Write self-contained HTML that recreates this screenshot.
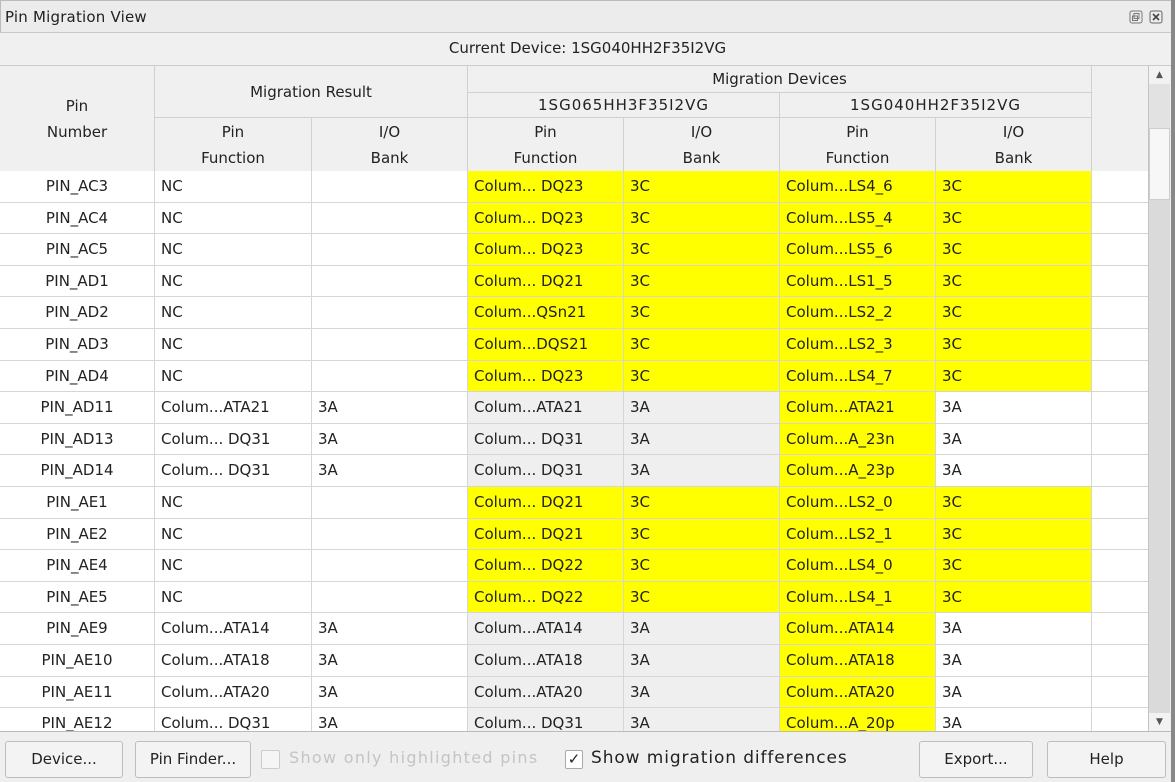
<!DOCTYPE html>
<html><head><meta charset="utf-8"><style>
*{margin:0;padding:0;box-sizing:border-box}
body{width:1175px;height:782px;background:#efefef;font-family:"DejaVu Sans","Liberation Sans",sans-serif;font-size:15px;color:#222;position:relative;overflow:hidden}
.abs{position:absolute}
.title{left:0;top:0;width:1175px;height:33px;background:#ececec;border:1px solid #bbb;border-bottom:1px solid #c8c8c8}
.title span{position:absolute;left:4px;top:7px;font-size:15px;letter-spacing:0.2px}
.cur{left:0;top:33px;width:1175px;height:33px;background:#f0f0f0;border-bottom:1px solid #ccc;text-align:center;line-height:30px}
.h{position:absolute;background:#f0f0f0;border-right:1px solid #d0d0d0;border-bottom:1px solid #d0d0d0;text-align:center;display:flex;align-items:center;justify-content:center;line-height:26px}
.row{position:absolute;left:0;width:1148px;height:31.6px;border-bottom:1px solid #d6d6d6;background:#fff}
.c{position:absolute;top:0;height:100%;border-right:1px solid #d6d6d6;padding-left:6px;line-height:31px;white-space:nowrap;overflow:hidden}
.y{background:#ffff00}.g{background:#efefef}
.btn{position:absolute;top:741px;height:37px;border:1px solid #bdbdbd;border-radius:3px;background:#f3f3f3;text-align:center;line-height:35px}
</style></head><body>
<div class="abs title"><span>Pin Migration View</span>
<svg class="abs" style="left:1128px;top:9px" width="14" height="14"><rect x="1" y="1" width="12" height="12" rx="2" fill="none" stroke="#777"/><rect x="5" y="3.5" width="5" height="5" fill="none" stroke="#777"/><rect x="3.5" y="6" width="5" height="4.5" fill="none" stroke="#777"/></svg>
<svg class="abs" style="left:1148px;top:9px" width="14" height="14"><rect x="1" y="1" width="12" height="12" rx="2" fill="none" stroke="#666"/><path d="M4 4L10 10M10 4L4 10" stroke="#444" stroke-width="1.6"/></svg>
</div>
<div class="abs cur">Current Device: 1SG040HH2F35I2VG</div>
<div class="abs" style="left:0;top:66px;width:1148px;height:106px;background:#f0f0f0"></div>
<div class="h" style="left:0;top:66px;width:155px;height:106px;border-bottom:none">Pin<br>Number</div>
<div class="h" style="left:155px;top:66px;width:313px;height:52px">Migration Result</div>
<div class="h" style="left:468px;top:66px;width:624px;height:27px">Migration Devices</div>
<div class="h" style="left:468px;top:93px;width:312px;height:25px;letter-spacing:1px">1SG065HH3F35I2VG</div>
<div class="h" style="left:780px;top:93px;width:312px;height:25px;letter-spacing:1px">1SG040HH2F35I2VG</div>
<div class="h" style="left:155px;top:118px;width:157px;height:54px">Pin<br>Function</div>
<div class="h" style="left:312px;top:118px;width:156px;height:54px">I/O<br>Bank</div>
<div class="h" style="left:468px;top:118px;width:156px;height:54px">Pin<br>Function</div>
<div class="h" style="left:624px;top:118px;width:156px;height:54px">I/O<br>Bank</div>
<div class="h" style="left:780px;top:118px;width:156px;height:54px">Pin<br>Function</div>
<div class="h" style="left:936px;top:118px;width:156px;height:54px">I/O<br>Bank</div>
<div class="abs" style="left:0;top:171px;width:1148px;height:560px;background:#fff;overflow:hidden" id="tb">
<div class="row" style="top:0px"><div class="c" style="left:0;width:155px;text-align:center;padding:0">PIN_AC3</div><div class="c" style="left:155px;width:157px">NC</div><div class="c" style="left:312px;width:156px"></div><div class="c y" style="left:468px;width:156px">Colum... DQ23</div><div class="c y" style="left:624px;width:156px">3C</div><div class="c y" style="left:780px;width:156px">Colum...LS4_6</div><div class="c y" style="left:936px;width:156px">3C</div></div>
<div class="row" style="top:31.6px"><div class="c" style="left:0;width:155px;text-align:center;padding:0">PIN_AC4</div><div class="c" style="left:155px;width:157px">NC</div><div class="c" style="left:312px;width:156px"></div><div class="c y" style="left:468px;width:156px">Colum... DQ23</div><div class="c y" style="left:624px;width:156px">3C</div><div class="c y" style="left:780px;width:156px">Colum...LS5_4</div><div class="c y" style="left:936px;width:156px">3C</div></div>
<div class="row" style="top:63.2px"><div class="c" style="left:0;width:155px;text-align:center;padding:0">PIN_AC5</div><div class="c" style="left:155px;width:157px">NC</div><div class="c" style="left:312px;width:156px"></div><div class="c y" style="left:468px;width:156px">Colum... DQ23</div><div class="c y" style="left:624px;width:156px">3C</div><div class="c y" style="left:780px;width:156px">Colum...LS5_6</div><div class="c y" style="left:936px;width:156px">3C</div></div>
<div class="row" style="top:94.8px"><div class="c" style="left:0;width:155px;text-align:center;padding:0">PIN_AD1</div><div class="c" style="left:155px;width:157px">NC</div><div class="c" style="left:312px;width:156px"></div><div class="c y" style="left:468px;width:156px">Colum... DQ21</div><div class="c y" style="left:624px;width:156px">3C</div><div class="c y" style="left:780px;width:156px">Colum...LS1_5</div><div class="c y" style="left:936px;width:156px">3C</div></div>
<div class="row" style="top:126.4px"><div class="c" style="left:0;width:155px;text-align:center;padding:0">PIN_AD2</div><div class="c" style="left:155px;width:157px">NC</div><div class="c" style="left:312px;width:156px"></div><div class="c y" style="left:468px;width:156px">Colum...QSn21</div><div class="c y" style="left:624px;width:156px">3C</div><div class="c y" style="left:780px;width:156px">Colum...LS2_2</div><div class="c y" style="left:936px;width:156px">3C</div></div>
<div class="row" style="top:158px"><div class="c" style="left:0;width:155px;text-align:center;padding:0">PIN_AD3</div><div class="c" style="left:155px;width:157px">NC</div><div class="c" style="left:312px;width:156px"></div><div class="c y" style="left:468px;width:156px">Colum...DQS21</div><div class="c y" style="left:624px;width:156px">3C</div><div class="c y" style="left:780px;width:156px">Colum...LS2_3</div><div class="c y" style="left:936px;width:156px">3C</div></div>
<div class="row" style="top:189.6px"><div class="c" style="left:0;width:155px;text-align:center;padding:0">PIN_AD4</div><div class="c" style="left:155px;width:157px">NC</div><div class="c" style="left:312px;width:156px"></div><div class="c y" style="left:468px;width:156px">Colum... DQ23</div><div class="c y" style="left:624px;width:156px">3C</div><div class="c y" style="left:780px;width:156px">Colum...LS4_7</div><div class="c y" style="left:936px;width:156px">3C</div></div>
<div class="row" style="top:221.2px"><div class="c" style="left:0;width:155px;text-align:center;padding:0">PIN_AD11</div><div class="c" style="left:155px;width:157px">Colum...ATA21</div><div class="c" style="left:312px;width:156px">3A</div><div class="c g" style="left:468px;width:156px">Colum...ATA21</div><div class="c g" style="left:624px;width:156px">3A</div><div class="c y" style="left:780px;width:156px">Colum...ATA21</div><div class="c" style="left:936px;width:156px">3A</div></div>
<div class="row" style="top:252.8px"><div class="c" style="left:0;width:155px;text-align:center;padding:0">PIN_AD13</div><div class="c" style="left:155px;width:157px">Colum... DQ31</div><div class="c" style="left:312px;width:156px">3A</div><div class="c g" style="left:468px;width:156px">Colum... DQ31</div><div class="c g" style="left:624px;width:156px">3A</div><div class="c y" style="left:780px;width:156px">Colum...A_23n</div><div class="c" style="left:936px;width:156px">3A</div></div>
<div class="row" style="top:284.4px"><div class="c" style="left:0;width:155px;text-align:center;padding:0">PIN_AD14</div><div class="c" style="left:155px;width:157px">Colum... DQ31</div><div class="c" style="left:312px;width:156px">3A</div><div class="c g" style="left:468px;width:156px">Colum... DQ31</div><div class="c g" style="left:624px;width:156px">3A</div><div class="c y" style="left:780px;width:156px">Colum...A_23p</div><div class="c" style="left:936px;width:156px">3A</div></div>
<div class="row" style="top:316px"><div class="c" style="left:0;width:155px;text-align:center;padding:0">PIN_AE1</div><div class="c" style="left:155px;width:157px">NC</div><div class="c" style="left:312px;width:156px"></div><div class="c y" style="left:468px;width:156px">Colum... DQ21</div><div class="c y" style="left:624px;width:156px">3C</div><div class="c y" style="left:780px;width:156px">Colum...LS2_0</div><div class="c y" style="left:936px;width:156px">3C</div></div>
<div class="row" style="top:347.6px"><div class="c" style="left:0;width:155px;text-align:center;padding:0">PIN_AE2</div><div class="c" style="left:155px;width:157px">NC</div><div class="c" style="left:312px;width:156px"></div><div class="c y" style="left:468px;width:156px">Colum... DQ21</div><div class="c y" style="left:624px;width:156px">3C</div><div class="c y" style="left:780px;width:156px">Colum...LS2_1</div><div class="c y" style="left:936px;width:156px">3C</div></div>
<div class="row" style="top:379.2px"><div class="c" style="left:0;width:155px;text-align:center;padding:0">PIN_AE4</div><div class="c" style="left:155px;width:157px">NC</div><div class="c" style="left:312px;width:156px"></div><div class="c y" style="left:468px;width:156px">Colum... DQ22</div><div class="c y" style="left:624px;width:156px">3C</div><div class="c y" style="left:780px;width:156px">Colum...LS4_0</div><div class="c y" style="left:936px;width:156px">3C</div></div>
<div class="row" style="top:410.8px"><div class="c" style="left:0;width:155px;text-align:center;padding:0">PIN_AE5</div><div class="c" style="left:155px;width:157px">NC</div><div class="c" style="left:312px;width:156px"></div><div class="c y" style="left:468px;width:156px">Colum... DQ22</div><div class="c y" style="left:624px;width:156px">3C</div><div class="c y" style="left:780px;width:156px">Colum...LS4_1</div><div class="c y" style="left:936px;width:156px">3C</div></div>
<div class="row" style="top:442.4px"><div class="c" style="left:0;width:155px;text-align:center;padding:0">PIN_AE9</div><div class="c" style="left:155px;width:157px">Colum...ATA14</div><div class="c" style="left:312px;width:156px">3A</div><div class="c g" style="left:468px;width:156px">Colum...ATA14</div><div class="c g" style="left:624px;width:156px">3A</div><div class="c y" style="left:780px;width:156px">Colum...ATA14</div><div class="c" style="left:936px;width:156px">3A</div></div>
<div class="row" style="top:474px"><div class="c" style="left:0;width:155px;text-align:center;padding:0">PIN_AE10</div><div class="c" style="left:155px;width:157px">Colum...ATA18</div><div class="c" style="left:312px;width:156px">3A</div><div class="c g" style="left:468px;width:156px">Colum...ATA18</div><div class="c g" style="left:624px;width:156px">3A</div><div class="c y" style="left:780px;width:156px">Colum...ATA18</div><div class="c" style="left:936px;width:156px">3A</div></div>
<div class="row" style="top:505.6px"><div class="c" style="left:0;width:155px;text-align:center;padding:0">PIN_AE11</div><div class="c" style="left:155px;width:157px">Colum...ATA20</div><div class="c" style="left:312px;width:156px">3A</div><div class="c g" style="left:468px;width:156px">Colum...ATA20</div><div class="c g" style="left:624px;width:156px">3A</div><div class="c y" style="left:780px;width:156px">Colum...ATA20</div><div class="c" style="left:936px;width:156px">3A</div></div>
<div class="row" style="top:537.2px"><div class="c" style="left:0;width:155px;text-align:center;padding:0">PIN_AE12</div><div class="c" style="left:155px;width:157px">Colum... DQ31</div><div class="c" style="left:312px;width:156px">3A</div><div class="c g" style="left:468px;width:156px">Colum... DQ31</div><div class="c g" style="left:624px;width:156px">3A</div><div class="c y" style="left:780px;width:156px">Colum...A_20p</div><div class="c" style="left:936px;width:156px">3A</div></div>
</div>
<div class="abs" style="left:1148px;top:66px;width:22px;height:665px;background:#dadada;border-left:1px solid #c4c4c4"></div>
<div class="abs" style="left:1149px;top:66px;width:21px;height:18px;background:#f2f2f2;text-align:center;font-size:9px;line-height:18px;color:#555">▲</div>
<div class="abs" style="left:1149px;top:84px;width:21px;height:44px;background:#e2e2e2"></div>
<div class="abs" style="left:1149px;top:128px;width:21px;height:72px;background:#f7f7f7;border:1px solid #ccc"></div>
<div class="abs" style="left:1149px;top:713px;width:21px;height:18px;background:#f2f2f2;text-align:center;font-size:9px;line-height:18px;color:#555">▼</div>
<div class="abs" style="left:1171px;top:0;width:4px;height:782px;background:#888"></div>
<div class="abs" style="left:0;top:731px;width:1171px;height:1px;background:#bbb"></div>
<div class="btn" style="left:5px;width:118px">Device...</div>
<div class="btn" style="left:135px;width:116px">Pin Finder...</div>
<div class="abs" style="left:261px;top:750px;width:19px;height:19px;border:1px solid #ccc;background:#f5f5f5;border-radius:2px"></div>
<div class="abs" style="left:289px;top:748px;color:#c4c4c4;font-size:16px;letter-spacing:1.3px;white-space:nowrap">Show only highlighted pins</div>
<div class="abs" style="left:565px;top:750px;width:18px;height:19px;border:1px solid #aaa;background:#fff;border-radius:2px;font-size:15px;line-height:17px;text-align:center">✓</div>
<div class="abs" style="left:591px;top:748px;font-size:17px;letter-spacing:0.9px;white-space:nowrap">Show migration differences</div>
<div class="btn" style="left:919px;width:114px">Export...</div>
<div class="btn" style="left:1047px;width:119px">Help</div>
</body></html>
